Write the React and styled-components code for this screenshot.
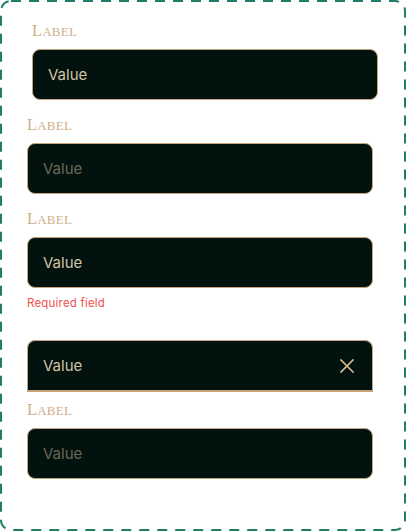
import React from "react";
import styled, { createGlobalStyle } from "styled-components";

const GlobalStyle = createGlobalStyle`
  * { box-sizing: border-box; }
  body {
    margin: 0;
    background: #ffffff;
    font-family: Inter, "Noto Sans", sans-serif;
  }
`;

const dashed = encodeURIComponent(
  "<svg xmlns='http://www.w3.org/2000/svg' width='406' height='531'><rect x='1' y='1' width='404' height='529' rx='10' fill='none' stroke='#1f7d69' stroke-width='2' stroke-dasharray='10 8'/></svg>"
);

const Frame = styled.div`
  width: 406px;
  height: 531px;
  background: url("data:image/svg+xml,${dashed}") no-repeat;
  padding: 22px 0 0 27px;
  display: flex;
  flex-direction: column;
`;

const Field = styled.div`
  display: flex;
  flex-direction: column;
  width: 346px;
  margin-left: ${(p) => p.$shift || 0}px;
  margin-bottom: ${(p) => p.$after ?? 16}px;
`;

const Label = styled.label`
  font-family: "Liberation Serif", "DejaVu Serif", serif;
  font-size: 13px;
  line-height: 18px;
  height: 18px;
  text-transform: uppercase;
  color: #d0b08a;
  margin-bottom: 9px;
  letter-spacing: 0.2px;

  &::first-letter {
    font-size: 16.5px;
  }
`;

const Box = styled.div`
  height: ${(p) => (p.$underline ? 52 : 51)}px;
  display: flex;
  align-items: center;
  justify-content: space-between;
  padding: 0 18px 0 15px;
  background: #02120f;
  border: 1px solid #c5a47b;
  border-bottom-width: ${(p) => (p.$underline ? 2 : 1)}px;
  border-radius: ${(p) => (p.$underline ? "8px 8px 0 0" : "8px")};
`;

const Value = styled.span`
  font-size: 15px;
  color: ${(p) => (p.$muted ? "#6c6856" : "#d6c3a3")};
`;

const ErrorText = styled.div`
  margin-top: 8px;
  font-size: 11.5px;
  line-height: 14px;
  color: #f0514f;
  letter-spacing: 0.2px;
`;

const Clear = () => (
  <svg width="14" height="14" viewBox="0 0 14 14" fill="none">
    <path d="M1 1L13 13M13 1L1 13" stroke="#d6b890" strokeWidth="1.7" strokeLinecap="square" />
  </svg>
);

export default function App() {
  return (
    <>
      <GlobalStyle />
      <Frame>
        <Field $shift={5}>
          <Label>Label</Label>
          <Box>
            <Value>Value</Value>
          </Box>
        </Field>
        <Field>
          <Label>Label</Label>
          <Box>
            <Value $muted>Value</Value>
          </Box>
        </Field>
        <Field $after={30}>
          <Label>Label</Label>
          <Box>
            <Value>Value</Value>
          </Box>
          <ErrorText>Required field</ErrorText>
        </Field>
        <Field $after={9}>
          <Box $underline>
            <Value>Value</Value>
            <Clear />
          </Box>
        </Field>
        <Field>
          <Label>Label</Label>
          <Box>
            <Value $muted>Value</Value>
          </Box>
        </Field>
      </Frame>
    </>
  );
}
